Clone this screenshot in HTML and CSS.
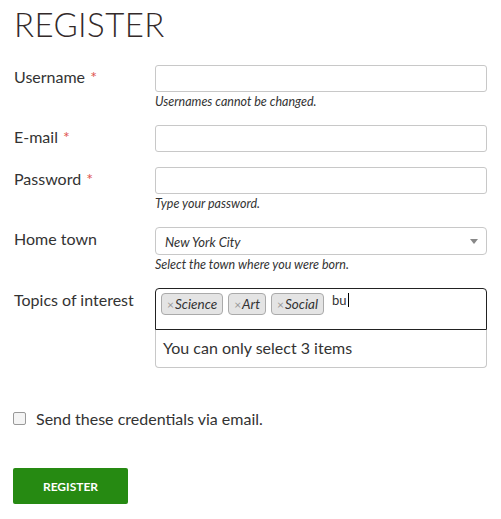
FILE: index.html
```html
<!DOCTYPE html>
<html lang="en">

<head>
    <meta charset="UTF-8">
    <title>Register</title>
    <link rel="stylesheet" href="styles.css">
</head>

<body>
    <h1 class="titulo">REGISTER</h1>

    <form class="registro">
        <div class="fila">
            <label class="etiqueta">Username <span class="req">*</span></label>
            <div class="campo">
                <input type="text" class="caja">
                <div class="ayuda">Usernames cannot be changed.</div>
            </div>
        </div>

        <div class="fila">
            <label class="etiqueta">E-mail <span class="req">*</span></label>
            <div class="campo">
                <input type="text" class="caja">
            </div>
        </div>

        <div class="fila">
            <label class="etiqueta">Password <span class="req">*</span></label>
            <div class="campo">
                <input type="password" class="caja">
                <div class="ayuda">Type your password.</div>
            </div>
        </div>

        <div class="fila">
            <label class="etiqueta">Home town</label>
            <div class="campo">
                <div class="selector">
                    <span>New York City</span>
                    <span class="flecha"></span>
                </div>
                <div class="ayuda">Select the town where you were born.</div>
            </div>
        </div>

        <div class="fila">
            <label class="etiqueta">Topics of interest</label>
            <div class="campo">
                <div class="multi">
                    <span class="tag"><span class="quitar">×</span>Science</span>
                    <span class="tag"><span class="quitar">×</span>Art</span>
                    <span class="tag"><span class="quitar">×</span>Social</span>
                    <span class="escrito">bu</span>
                </div>
                <div class="aviso">You can only select 3 items</div>
            </div>
        </div>

        <label class="enviar">
            <span class="check"></span>
            Send these credentials via email.
        </label>

        <button type="button" class="boton">REGISTER</button>
    </form>
</body>

</html>
```

FILE: styles.css
```css
body {
    font-family: 'Lato', 'Liberation Sans', sans-serif;
    color: #333;
    margin: 0;
    padding: 0 14px 0 13px;
    background-color: #fff;
}

.titulo {
    font-weight: 300;
    font-size: 33px;
    line-height: 40px;
    letter-spacing: 0.4px;
    margin: 4px 0 21px 1px;
    color: #332a2a;
}

.fila {
    display: grid;
    grid-template-columns: 142px 1fr;
    margin-bottom: 15px;
}

.etiqueta {
    font-size: 16px;
    line-height: 20px;
    padding: 2px 0 0 1px;
}

.req {
    color: #e0554f;
    margin-left: 1px;
}

.caja {
    display: block;
    width: 100%;
    height: 27px;
    box-sizing: border-box;
    border: 1px solid #c8c8c8;
    border-radius: 3px;
    margin: 0;
}

.ayuda {
    font-size: 12.5px;
    font-style: italic;
    line-height: 16px;
    margin-top: 2px;
    color: #333;
}

.selector {
    height: 28px;
    box-sizing: border-box;
    border: 1px solid #c8c8c8;
    border-radius: 4px;
    display: flex;
    align-items: center;
    justify-content: space-between;
    padding: 1px 8px 0 9px;
    font-size: 13px;
    font-style: italic;
}

.flecha {
    width: 0;
    height: 0;
    border-left: 4px solid transparent;
    border-right: 4px solid transparent;
    border-top: 5px solid #888;
}

.multi {
    height: 42px;
    box-sizing: border-box;
    border: 1px solid #222;
    border-radius: 4px 4px 0 0;
    padding: 4px 5px;
    display: flex;
    align-items: flex-start;
    gap: 5px;
}

.tag {
    height: 22px;
    box-sizing: border-box;
    background-color: #e4e4e4;
    border: 1px solid #aaa;
    border-radius: 4px;
    font-size: 13.5px;
    font-style: italic;
    line-height: 20px;
    padding: 0 5px;
    color: #333;
}

.quitar {
    font-style: normal;
    color: #999;
    font-size: 12px;
    margin-right: 1px;
}

.escrito {
    font-size: 13px;
    line-height: 14px;
    margin-left: 3px;
    padding-right: 1px;
    border-right: 1px solid #000;
}

.aviso {
    border: 1px solid #c8c8c8;
    border-top: none;
    border-radius: 0 0 4px 4px;
    font-size: 16px;
    line-height: 20px;
    padding: 8px 7px 9px;
}

.enviar {
    display: flex;
    align-items: center;
    font-size: 16px;
    margin: 41px 0 0;
}

.check {
    width: 11px;
    height: 11px;
    border: 1px solid #999;
    border-radius: 2px;
    background-color: #f4f4f4;
    margin-right: 10px;
}

.boton {
    display: block;
    margin-top: 40px;
    width: 115px;
    height: 36px;
    border: none;
    border-radius: 2px;
    background-color: #268a12;
    color: #fff;
    font-family: 'Lato', sans-serif;
    font-weight: bold;
    font-size: 12px;
}
```
